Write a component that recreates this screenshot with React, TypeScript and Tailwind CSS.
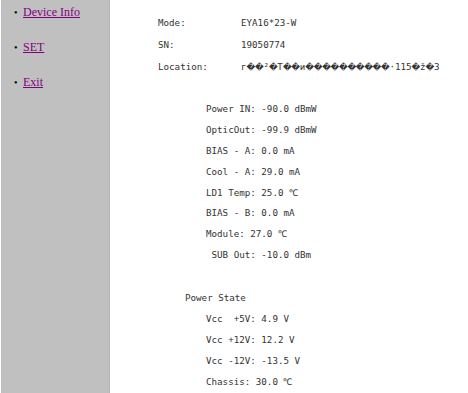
import React from "react";

const mono = { fontFamily: '"DejaVu Sans Mono", "Liberation Mono", monospace' };

function Row({ children, cls = "" }: { children: React.ReactNode; cls?: string }) {
  return <div className={`h-[20.9px] flex items-center whitespace-pre ${cls}`}>{children}</div>;
}

function D({ n = 1 }: { n?: number }) {
  return (
    <span className="text-[8.5px] tracking-[-0.3px]" style={{ fontFamily: '"DejaVu Sans", sans-serif' }}>
      {"\uFFFD".repeat(n)}
    </span>
  );
}

export default function App() {
  const data = [
    "Power IN: -90.0 dBmW",
    "OpticOut: -99.9 dBmW",
    "BIAS - A: 0.0 mA",
    "Cool - A: 29.0 mA",
    "LD1 Temp: 25.0 \u2103",
    "BIAS - B: 0.0 mA",
    "Module: 27.0 \u2103",
    " SUB Out: -10.0 dBm",
  ];
  const power = ["Vcc  +5V: 4.9 V", "Vcc +12V: 12.2 V", "Vcc -12V: -13.5 V", "Chassis: 30.0 \u2103"];
  const links = ["Device Info", "SET", "Exit"];
  return (
    <div className="flex w-[468px] h-[393px] bg-white overflow-hidden">
      <div className="ml-px w-[109px] h-full bg-[#c0c0c0] border-r border-[#b4b4b4] pt-[1px]" style={{ fontFamily: '"Liberation Serif", serif' }}>
        {links.map((l) => (
          <div key={l} className="h-[35px] flex items-start pt-[3px] pl-[13px] text-[12px] leading-[17px]">
            <span className="text-black text-[10px] w-[9px]">•</span>
            <a href="#" className="text-[#800080] underline">{l}</a>
          </div>
        ))}
      </div>
      <div className="flex-1 text-[#333] text-[9.2px]" style={mono}>
        <div className="pt-[12px] pl-[48px]">
          {[
            ["Mode:", <>EYA16*23-W</>],
            ["SN:", <>19050774</>],
            [
              "Location:",
              <>
                г<D n={2} />²<D />T<D n={2} />и<D n={10} />·115<D />ž<D />3
              </>,
            ],
          ].map(([k, v], i) => (
            <div key={i} className="h-[21.8px] flex items-center whitespace-pre">
              <span className="w-[83px]">{k}</span>
              <span>{v}</span>
            </div>
          ))}
        </div>
        <div className="mt-[21px] pl-[96px]">
          {data.map((d) => (
            <Row key={d}>{d}</Row>
          ))}
        </div>
        <div className="mt-[22px] pl-[75px]">
          <Row>Power State</Row>
        </div>
        <div className="pl-[96px]">
          {power.map((d) => (
            <Row key={d}>{d}</Row>
          ))}
        </div>
      </div>
    </div>
  );
}
